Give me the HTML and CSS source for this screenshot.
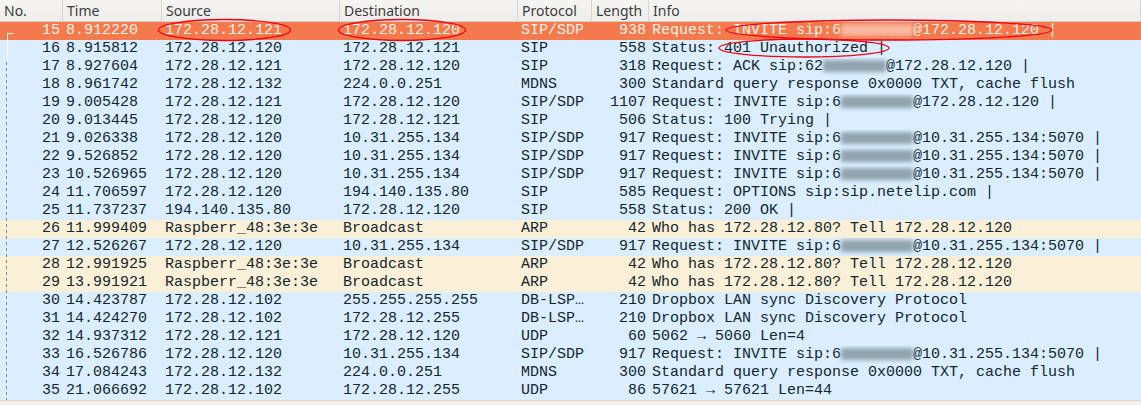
FILE: index.html
```html
<!DOCTYPE html>
<html>
<head lang="en">
    <meta charset="UTF-8">
    <title>Packet list</title>
    <link rel="stylesheet" href="styles.css">
</head>
<body>
<div class="list">
    <div class="head">
        <div>No.</div><div>Time</div><div>Source</div><div>Destination</div><div>Protocol</div><div>Length</div><div>Info</div>
    </div>
    <div class="row sel"><div class="no">15</div><div>8.912220</div><div>172.28.12.121</div><div>172.28.12.120</div><div>SIP/SDP</div><div class="len">938</div><div>Request: INVITE sip:6<span class="blur light b8"></span>@172.28.12.120 |</div></div>
    <div class="row"><div class="no">16</div><div>8.915812</div><div>172.28.12.120</div><div>172.28.12.121</div><div>SIP</div><div class="len">558</div><div>Status: 401 Unauthorized |</div></div>
    <div class="row"><div class="no">17</div><div>8.927604</div><div>172.28.12.121</div><div>172.28.12.120</div><div>SIP</div><div class="len">318</div><div>Request: ACK sip:62<span class="blur b7"></span>@172.28.12.120 |</div></div>
    <div class="row"><div class="no">18</div><div>8.961742</div><div>172.28.12.132</div><div>224.0.0.251</div><div>MDNS</div><div class="len">300</div><div>Standard query response 0x0000 TXT, cache flush</div></div>
    <div class="row"><div class="no">19</div><div>9.005428</div><div>172.28.12.121</div><div>172.28.12.120</div><div>SIP/SDP</div><div class="len">1107</div><div>Request: INVITE sip:6<span class="blur b8"></span>@172.28.12.120 |</div></div>
    <div class="row"><div class="no">20</div><div>9.013445</div><div>172.28.12.120</div><div>172.28.12.121</div><div>SIP</div><div class="len">506</div><div>Status: 100 Trying |</div></div>
    <div class="row"><div class="no">21</div><div>9.026338</div><div>172.28.12.120</div><div>10.31.255.134</div><div>SIP/SDP</div><div class="len">917</div><div>Request: INVITE sip:6<span class="blur b8"></span>@10.31.255.134:5070 |</div></div>
    <div class="row"><div class="no">22</div><div>9.526852</div><div>172.28.12.120</div><div>10.31.255.134</div><div>SIP/SDP</div><div class="len">917</div><div>Request: INVITE sip:6<span class="blur b8"></span>@10.31.255.134:5070 |</div></div>
    <div class="row"><div class="no">23</div><div>10.526965</div><div>172.28.12.120</div><div>10.31.255.134</div><div>SIP/SDP</div><div class="len">917</div><div>Request: INVITE sip:6<span class="blur b8"></span>@10.31.255.134:5070 |</div></div>
    <div class="row"><div class="no">24</div><div>11.706597</div><div>172.28.12.120</div><div>194.140.135.80</div><div>SIP</div><div class="len">585</div><div>Request: OPTIONS sip:sip.netelip.com |</div></div>
    <div class="row"><div class="no">25</div><div>11.737237</div><div>194.140.135.80</div><div>172.28.12.120</div><div>SIP</div><div class="len">558</div><div>Status: 200 OK |</div></div>
    <div class="row arp"><div class="no">26</div><div>11.999409</div><div>Raspberr_48:3e:3e</div><div>Broadcast</div><div>ARP</div><div class="len">42</div><div>Who has 172.28.12.80? Tell 172.28.12.120</div></div>
    <div class="row"><div class="no">27</div><div>12.526267</div><div>172.28.12.120</div><div>10.31.255.134</div><div>SIP/SDP</div><div class="len">917</div><div>Request: INVITE sip:6<span class="blur b8"></span>@10.31.255.134:5070 |</div></div>
    <div class="row arp"><div class="no">28</div><div>12.991925</div><div>Raspberr_48:3e:3e</div><div>Broadcast</div><div>ARP</div><div class="len">42</div><div>Who has 172.28.12.80? Tell 172.28.12.120</div></div>
    <div class="row arp"><div class="no">29</div><div>13.991921</div><div>Raspberr_48:3e:3e</div><div>Broadcast</div><div>ARP</div><div class="len">42</div><div>Who has 172.28.12.80? Tell 172.28.12.120</div></div>
    <div class="row"><div class="no">30</div><div>14.423787</div><div>172.28.12.102</div><div>255.255.255.255</div><div>DB-LSP…</div><div class="len">210</div><div>Dropbox LAN sync Discovery Protocol</div></div>
    <div class="row"><div class="no">31</div><div>14.424270</div><div>172.28.12.102</div><div>172.28.12.255</div><div>DB-LSP…</div><div class="len">210</div><div>Dropbox LAN sync Discovery Protocol</div></div>
    <div class="row"><div class="no">32</div><div>14.937312</div><div>172.28.12.121</div><div>172.28.12.120</div><div>UDP</div><div class="len">60</div><div>5062 → 5060 Len=4</div></div>
    <div class="row"><div class="no">33</div><div>16.526786</div><div>172.28.12.120</div><div>10.31.255.134</div><div>SIP/SDP</div><div class="len">917</div><div>Request: INVITE sip:6<span class="blur b8"></span>@10.31.255.134:5070 |</div></div>
    <div class="row"><div class="no">34</div><div>17.084243</div><div>172.28.12.132</div><div>224.0.0.251</div><div>MDNS</div><div class="len">300</div><div>Standard query response 0x0000 TXT, cache flush</div></div>
    <div class="row"><div class="no">35</div><div>21.066692</div><div>172.28.12.102</div><div>172.28.12.255</div><div>UDP</div><div class="len">86</div><div>57621 → 57621 Len=44</div></div>
    <div class="foot"></div>
    <!-- tree line and the red marks drawn over the list -->
    <svg class="marks" width="1141" height="405">
        <path class="tree-top" d="M13.5 33.5H7.5V62"/>
        <path class="tree-rest" d="M6.5 62V400"/>
        <ellipse class="mark" cx="224.5" cy="30" rx="66" ry="10.5"/>
        <ellipse class="mark" cx="402" cy="30" rx="63.5" ry="10.5"/>
        <ellipse class="mark" cx="889" cy="30" rx="163" ry="10"/>
        <ellipse class="mark" cx="804" cy="48" rx="85" ry="9"/>
    </svg>
</div>
</body>
</html>
```

FILE: styles.css
```css
* {
    margin: 0;
    padding: 0;
    box-sizing: border-box;
}

body {
    background: #f2f1f0;
    overflow: hidden;
}

.list {
    position: relative;
    width: 1141px;
    height: 405px;
}

.head, .row {
    display: grid;
    grid-template-columns: 63px 99px 178px 178px 74px 57px 1fr;
}

.head {
    height: 22px;
    background: linear-gradient(#f6f5f4, #eeedeb);
    border-bottom: 1px solid #d3cfc9;
    font: 14px/21px "Noto Sans", "Open Sans", sans-serif;
    color: #3c3c3c;
}

.head div {
    padding-left: 4px;
    border-right: 1px solid #d8d5d0;
    white-space: nowrap;
    overflow: hidden;
}

.row {
    height: 18px;
    background: #daeeff;
    font: 15px/18px "Liberation Mono", monospace;
    color: #12272e;
    white-space: pre;
}

.row div {
    padding: 0 3px;
    overflow: hidden;
}

.row .no, .row .len {
    text-align: right;
}

.row .no {
    padding-right: 3px;
}

.row.sel {
    background: #f4794c;
    color: #fff2e8;
}

.row.arp {
    background: #faf0d7;
}

.blur {
    display: inline-block;
    height: 12px;
    vertical-align: -2px;
    background: #8fa2ae;
    filter: blur(2px);
}

.blur.light {
    background: #f9b9a0;
}

.b7 {
    width: 63px;
}

.b8 {
    width: 72px;
}

.foot {
    height: 5px;
    border-top: 1px solid #e4d9bd;
}

.marks {
    position: absolute;
    left: 0;
    top: 0;
    pointer-events: none;
}

.tree-top {
    fill: none;
    stroke: #fff;
    stroke-width: 1;
}

.tree-rest {
    fill: none;
    stroke: #7d8a91;
    stroke-width: 1;
    stroke-dasharray: 3 3;
}

.mark {
    fill: none;
    stroke: #f00010;
    stroke-width: 1.3;
}
```
